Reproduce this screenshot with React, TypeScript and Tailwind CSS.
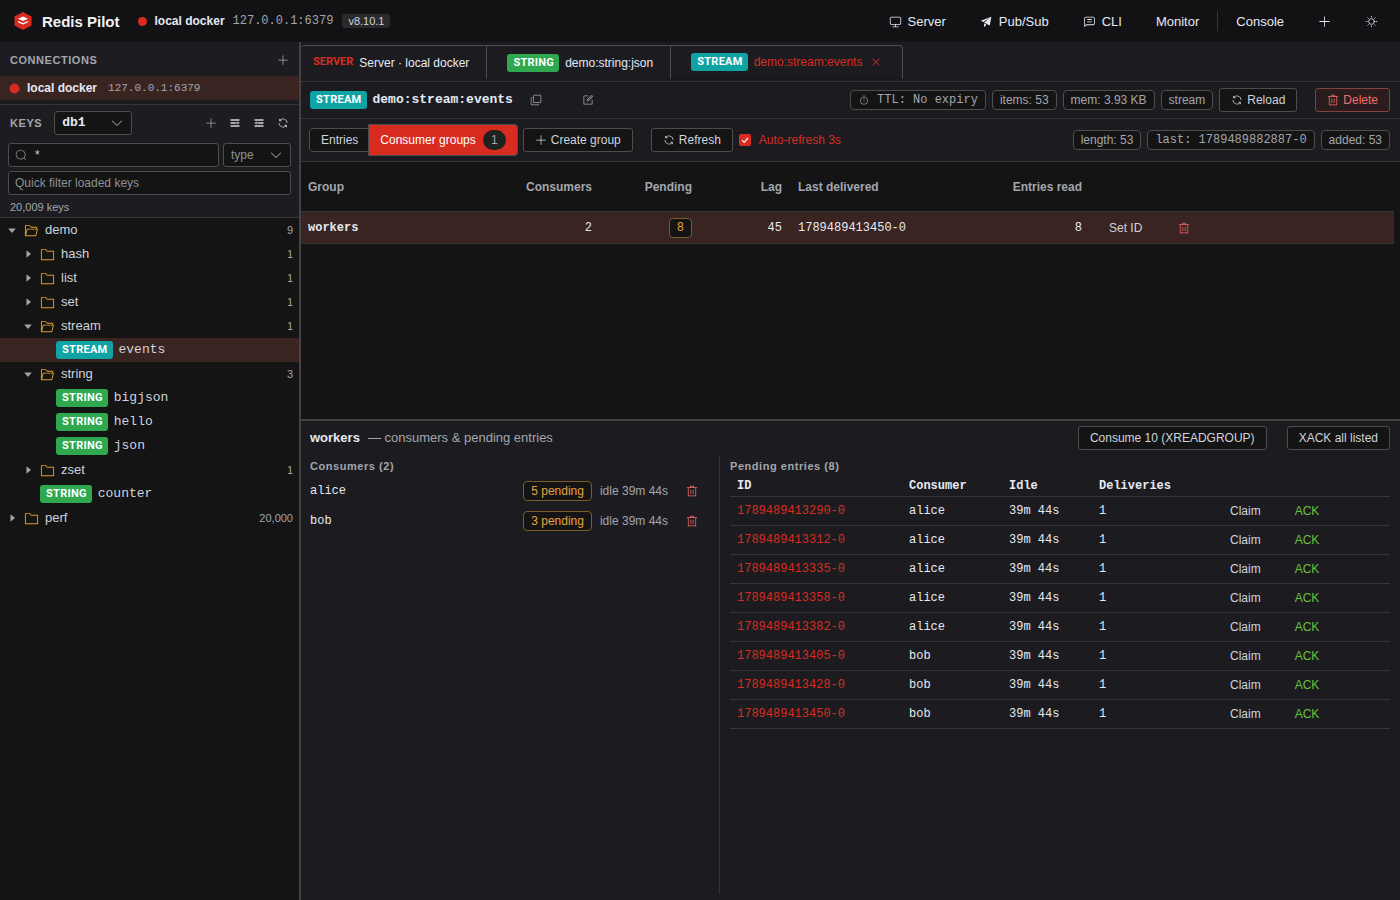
import type { ReactNode } from 'react'
import clsx from 'clsx'

const icons = {
  plus: 'M480 480V128a32 32 0 0 1 64 0v352h352a32 32 0 1 1 0 64H544v352a32 32 0 1 1-64 0V544H128a32 32 0 0 1 0-64z',
  close:
    'M764.288 214.592 512 466.88 259.712 214.592a31.936 31.936 0 0 0-45.12 45.12L466.752 512 214.528 764.224a31.936 31.936 0 1 0 45.12 45.184L512 557.184l252.288 252.288a31.936 31.936 0 0 0 45.12-45.12L557.12 512.064l252.288-252.352a31.936 31.936 0 1 0-45.12-45.184z',
  trash:
    'M160 256H96a32 32 0 0 1 0-64h256V95.936a32 32 0 0 1 32-32h256a32 32 0 0 1 32 32V192h256a32 32 0 1 1 0 64h-64v672a32 32 0 0 1-32 32H192a32 32 0 0 1-32-32zm448-64v-64H416v64zM224 896h576V256H224zm192-128a32 32 0 0 1-32-32V416a32 32 0 0 1 64 0v320a32 32 0 0 1-32 32m192 0a32 32 0 0 1-32-32V416a32 32 0 0 1 64 0v320a32 32 0 0 1-32 32',
  refresh:
    'M771.776 794.88A384 384 0 0 1 128 512h64a320 320 0 0 0 555.712 216.448H654.72a32 32 0 1 1 0-64h149.056a32 32 0 0 1 32 32v148.928a32 32 0 1 1-64 0v-50.56zM276.288 295.616h92.992a32 32 0 0 1 0 64H220.16a32 32 0 0 1-32-32V178.56a32 32 0 0 1 64 0v50.56A384 384 0 0 1 896.128 512h-64a320 320 0 0 0-555.776-216.384z',
  search:
    'm795.904 750.72 124.992 124.928a32 32 0 0 1-45.248 45.248L750.656 795.904a416 416 0 1 1 45.248-45.248zM480 832a352 352 0 1 0 0-704 352 352 0 0 0 0 704',
  arrowDown:
    'M831.872 340.864 512 652.672 192.128 340.864a30.592 30.592 0 0 0-42.752 0 29.12 29.12 0 0 0 0 41.6L489.664 714.24a32 32 0 0 0 44.672 0l340.288-331.712a29.12 29.12 0 0 0 0-41.728 30.592 30.592 0 0 0-42.752 0z',
  folder:
    'M128 192v640h768V320H485.76L357.504 192zm-32-64h287.872l128.384 128H928a32 32 0 0 1 32 32v576a32 32 0 0 1-32 32H96a32 32 0 0 1-32-32V160a32 32 0 0 1 32-32',
  folderOpen:
    'M878.08 448H241.92l-96 384h636.16l96-384zM832 384v-64H485.76L357.504 192H128v448l57.92-231.744A32 32 0 0 1 216.96 384zm-24.96 512H96a32 32 0 0 1-32-32V160a32 32 0 0 1 32-32h287.872l128.384 128H864a32 32 0 0 1 32 32v96h23.04a32 32 0 0 1 31.04 39.744l-112 448A32 32 0 0 1 807.04 896',
  caret: 'M384 192v640l384-320.064z',
  copy: 'M768 832a128 128 0 0 1-128 128H192A128 128 0 0 1 64 832V384a128 128 0 0 1 128-128v64a64 64 0 0 0-64 64v448a64 64 0 0 0 64 64h448a64 64 0 0 0 64-64zM384 128a64 64 0 0 0-64 64v448a64 64 0 0 0 64 64h448a64 64 0 0 0 64-64V192a64 64 0 0 0-64-64zm0-64h448a128 128 0 0 1 128 128v448a128 128 0 0 1-128 128H384a128 128 0 0 1-128-128V192A128 128 0 0 1 384 64',
  edit: 'M832 512a32 32 0 1 1 64 0v352a32 32 0 0 1-32 32H160a32 32 0 0 1-32-32V160a32 32 0 0 1 32-32h352a32 32 0 0 1 0 64H192v640h640zM469.952 554.24l52.8-7.552L847.104 222.4a32 32 0 1 0-45.248-45.248L477.44 501.44l-7.552 52.8zm422.4-422.4a96 96 0 0 1 0 135.808l-331.84 331.84a32 32 0 0 1-18.112 9.088L436.8 623.68a32 32 0 0 1-36.224-36.224l15.104-105.6a32 32 0 0 1 9.024-18.112l331.904-331.84a96 96 0 0 1 135.744 0z',
  timer:
    'M512 896a320 320 0 1 0 0-640 320 320 0 0 0 0 640m0 64a384 384 0 1 1 0-768 384 384 0 0 1 0 768M512 320a32 32 0 0 1 32 32l-.512 224a32 32 0 1 1-64 0L480 352a32 32 0 0 1 32-32M448 576a64 64 0 1 0 128 0 64 64 0 1 0-128 0m96-448v128h-64V128h-96a32 32 0 0 1 0-64h256a32 32 0 1 1 0 64z',
  monitor:
    'M544 768v128h192a32 32 0 1 1 0 64H288a32 32 0 1 1 0-64h192V768H192A128 128 0 0 1 64 640V256a128 128 0 0 1 128-128h640a128 128 0 0 1 128 128v384a128 128 0 0 1-128 128zM192 192a64 64 0 0 0-64 64v384a64 64 0 0 0 64 64h640a64 64 0 0 0 64-64V256a64 64 0 0 0-64-64z',
  promotion: 'm64 448 832-320-128 704-446.08-243.328L832 192 242.816 545.536zm256 512V657.024L512 768z',
  chat: 'M160 826.88 273.536 736H800a64 64 0 0 0 64-64V256a64 64 0 0 0-64-64H224a64 64 0 0 0-64 64zM296 800 147.968 918.4A32 32 0 0 1 96 893.44V256a128 128 0 0 1 128-128h576a128 128 0 0 1 128 128v416a128 128 0 0 1-128 128zM352 512h320q32 0 32 32t-32 32H352q-32 0-32-32t32-32m0-192h320q32 0 32 32t-32 32H352q-32 0-32-32t32-32',
  expand: 'M128 192h768v128H128zm0 256h512v128H128zm0 256h768v128H128zm576-352 192 160-192 128z',
  fold: 'M896 192H128v128h768zm0 256H384v128h512zm0 256H128v128h768zM320 384 128 512l192 128z',
}

function Icon({ name, className }: { name: keyof typeof icons; className?: string }) {
  return (
    <svg viewBox="0 0 1024 1024" fill="currentColor" className={clsx('shrink-0', className)} aria-hidden="true">
      <path d={icons[name]} />
    </svg>
  )
}

function SunIcon() {
  return (
    <svg viewBox="0 0 1024 1024" fill="none" stroke="currentColor" strokeWidth="64" strokeLinecap="round" className="size-[13px]" aria-hidden="true">
      <circle cx="512" cy="512" r="224" />
      <path d="M512 96v64M512 864v64M96 512h64M864 512h64M218 218l45 45M761 761l45 45M218 806l45-45M761 263l45-45" />
    </svg>
  )
}

function Logo() {
  return (
    <svg viewBox="0 0 20 20" className="size-5" aria-hidden="true">
      <path d="M10 1l8.500 4.500v9L10 19l-8.500-4.500v-9z" fill="#d82c20" />
      <path d="M10 5.500l5 2.200-5 2.200-5-2.200z" fill="#fff" />
      <path d="M5 10.600l5 2.200 5-2.200" fill="none" stroke="#fff" strokeWidth="1.300" />
    </svg>
  )
}

const badgeColors = {
  STREAM: 'bg-[#0fa3a3]',
  STRING: 'bg-[#2fa84f]',
}

function Badge({ type }: { type: keyof typeof badgeColors }) {
  return (
    <span
      className={clsx(
        'flex h-[18px] shrink-0 items-center rounded-[3px] pr-[5px] pl-1.5 font-[Roboto,sans-serif] text-[11px] leading-[18px] font-bold tracking-wide text-white',
        badgeColors[type],
      )}
    >
      {type}
    </span>
  )
}

function Tag({ mono, warn, children }: { mono?: boolean; warn?: boolean; children: ReactNode }) {
  return (
    <span
      className={clsx(
        'flex h-5 items-center rounded border bg-[#141414] px-[7px] text-xs whitespace-nowrap',
        warn ? 'border-[#7d5b28] text-[#e6a23c]' : 'border-[#4c4d4f] text-[#a3a6ad]',
        mono && "font-['Liberation_Mono',monospace]",
      )}
    >
      {children}
    </span>
  )
}

function Button({ className, children }: { className?: string; children: ReactNode }) {
  return (
    <button
      className={clsx(
        'flex h-6 items-center gap-1 rounded-[3px] border px-[11px] text-xs whitespace-nowrap',
        className,
      )}
    >
      {children}
    </button>
  )
}

const plain = 'border-[#4c4d4f] bg-[#141414] text-[#cfd3dc]'

type Node = { label: string; depth: number; count?: string; open?: boolean; type?: keyof typeof badgeColors; active?: boolean }

const tree: Node[] = [
  { label: 'demo', depth: 0, count: '9', open: true },
  { label: 'hash', depth: 1, count: '1' },
  { label: 'list', depth: 1, count: '1' },
  { label: 'set', depth: 1, count: '1' },
  { label: 'stream', depth: 1, count: '1', open: true },
  { label: 'events', depth: 2, type: 'STREAM', active: true },
  { label: 'string', depth: 1, count: '3', open: true },
  { label: 'bigjson', depth: 2, type: 'STRING' },
  { label: 'hello', depth: 2, type: 'STRING' },
  { label: 'json', depth: 2, type: 'STRING' },
  { label: 'zset', depth: 1, count: '1' },
  { label: 'counter', depth: 1, type: 'STRING' },
  { label: 'perf', depth: 0, count: '20,000' },
]

const indents = ['pl-1.5', 'pl-[22px]', 'pl-[38px]']

const pending = [
  ['1789489413290-0', 'alice'],
  ['1789489413312-0', 'alice'],
  ['1789489413335-0', 'alice'],
  ['1789489413358-0', 'alice'],
  ['1789489413382-0', 'alice'],
  ['1789489413405-0', 'bob'],
  ['1789489413428-0', 'bob'],
  ['1789489413450-0', 'bob'],
]

function TopBar() {
  return (
    <header className="flex h-[42px] shrink-0 items-center bg-[#121214] pr-[22px] pl-[13px] text-[13px]">
      <Logo />
      <h1 className="ml-[9px] text-[15px] leading-[23px] font-bold text-[#f0f2f5]">Redis Pilot</h1>
      <span className="ml-[18px] size-[9px] rounded-full bg-[#d82c20]" />
      <span className="ml-2 text-xs font-bold text-[#e5eaf3]">local docker</span>
      <span className="ml-2 font-['Liberation_Mono',monospace] text-xs text-[#a3a6ad]">127.0.0.1:6379</span>
      <span className="ml-[9px] rounded-[3px] bg-[#2a2a2d] px-1.5 text-[11px] leading-[14px] text-[#cfd3dc]">v8.10.1</span>
      <nav className="ml-auto flex items-center leading-[23px] text-[#e5eaf3]">
        <button className="flex items-center gap-1.5">
          <Icon name="monitor" className="size-[13px]" />
          Server
        </button>
        <button className="ml-[34px] flex items-center gap-1.5">
          <Icon name="promotion" className="size-[13px]" />
          Pub/Sub
        </button>
        <button className="ml-[34px] flex items-center gap-1.5">
          <Icon name="chat" className="size-[13px]" />
          CLI
        </button>
        <button className="ml-[34px]">Monitor</button>
        <span className="ml-[18px] h-5 w-px bg-[#363637]" />
        <button className="ml-[18px]">Console</button>
        <button className="ml-[34px]" aria-label="Add">
          <Icon name="plus" className="size-[13px]" />
        </button>
        <button className="ml-[34px]" aria-label="Toggle theme">
          <SunIcon />
        </button>
      </nav>
    </header>
  )
}

function TreeRow({ node }: { node: Node }) {
  return (
    <li
      className={clsx(
        'flex h-6 items-center pr-1.5 text-[13px] text-[#cfd3dc]',
        indents[node.depth],
        node.active && 'bg-[#3a2422]',
      )}
    >
      {node.type ? (
        <span className="ml-[18px] flex items-center gap-1.5">
          <Badge type={node.type} />
          <span className="font-['Liberation_Mono',monospace]">{node.label}</span>
        </span>
      ) : (
        <>
          <Icon name="caret" className={clsx('size-3 text-[#a3a6ad]', node.open && 'rotate-90')} />
          <Icon name={node.open ? 'folderOpen' : 'folder'} className="ml-1.5 size-[15px] text-[#d99e2b]" />
          <span className="ml-1.5">{node.label}</span>
          <span className="ml-auto text-[11px] text-[#a3a6ad]">{node.count}</span>
        </>
      )}
    </li>
  )
}

function Sidebar() {
  return (
    <aside className="flex w-[301px] shrink-0 flex-col border-r-2 border-[#434345] bg-[#141414]">
      <div className="bg-[#1d1d21] pb-1">
        <div className="flex h-[34px] items-center justify-between px-2.5 pt-0.5 text-[#a3a6ad]">
          <h2 className="text-[11px] font-bold tracking-wider">CONNECTIONS</h2>
          <button aria-label="Add connection">
            <Icon name="plus" className="size-3" />
          </button>
        </div>
        <div className="flex h-6 items-center bg-[#3a2422] pl-[9px]">
          <span className="size-[11px] rounded-full border border-[#7a2822] bg-[#d82c20]" />
          <span className="ml-[7px] text-xs font-bold text-[#e5eaf3]">local docker</span>
          <span className="ml-[11px] font-['Liberation_Mono',monospace] text-[11px] text-[#a3a6ad]">127.0.0.1:6379</span>
        </div>
      </div>
      <div className="flex flex-col border-y border-[#363637] bg-[#1d1d21] px-2 text-[#a3a6ad]">
        <div className="flex h-9 items-center pl-0.5">
          <h2 className="text-[11px] font-bold tracking-wider">KEYS</h2>
          <div className="relative ml-3 w-[78px]">
            <select
              aria-label="Database"
              className="block h-6 w-full appearance-none rounded-[3px] border border-[#4c4d4f] bg-[#141414] px-[7px] font-['Liberation_Mono',monospace] text-[13px] font-bold text-[#e5eaf3]"
            >
              <option>db1</option>
            </select>
            <Icon name="arrowDown" className="pointer-events-none absolute top-[5px] right-2 size-3.5" />
          </div>
          <div className="ml-auto flex items-center gap-3 pr-0.5">
            <button aria-label="New key">
              <Icon name="plus" className="size-3" />
            </button>
            <button aria-label="Expand all" className="text-[#cfd3dc]">
              <Icon name="expand" className="size-3" />
            </button>
            <button aria-label="Collapse all" className="text-[#cfd3dc]">
              <Icon name="fold" className="size-3" />
            </button>
            <button aria-label="Reload keys" className="text-[#cfd3dc]">
              <Icon name="refresh" className="size-3" />
            </button>
          </div>
        </div>
        <div className="mt-0.5 flex gap-1">
          <label className="flex h-6 min-w-0 flex-1 items-center gap-2 rounded-[3px] border border-[#4c4d4f] bg-[#141414] px-1.5">
            <Icon name="search" className="size-3 text-[#8d9095]" />
            <input aria-label="Key pattern" defaultValue="*" className="w-full min-w-0 text-xs text-[#cfd3dc] outline-none" />
          </label>
          <div className="relative w-[68px]">
            <select
              aria-label="Key type"
              className="block h-6 w-full appearance-none rounded-[3px] border border-[#4c4d4f] bg-[#141414] px-[7px] text-xs text-[#8d9095]"
            >
              <option>type</option>
            </select>
            <Icon name="arrowDown" className="pointer-events-none absolute top-[5px] right-2 size-3.5" />
          </div>
        </div>
        <input
          aria-label="Quick filter"
          placeholder="Quick filter loaded keys"
          className="mt-1 h-6 rounded-[3px] border border-[#4c4d4f] bg-[#141414] px-1.5 text-xs placeholder:text-[#8d9095]"
        />
        <p className="px-0.5 pt-[5px] pb-[3px] text-[11px] leading-[14px]">20,009 keys</p>
      </div>
      <ul>
        {tree.map((node) => (
          <TreeRow key={node.label} node={node} />
        ))}
      </ul>
    </aside>
  )
}

function Tabs() {
  return (
    <div className="flex h-10 shrink-0 border-b border-[#363637] pt-[3px] text-xs">
      <div className="flex h-[34px] rounded-t border-t border-r border-[#4c4d4f] text-[#e5eaf3]">
        <button className="flex items-center gap-1.5 border-r border-[#4c4d4f] pr-[17px] pl-3">
          <span className="font-[Roboto,sans-serif] text-[11px] font-bold text-[#d82c20]">SERVER</span>
          Server · local docker
        </button>
        <button className="flex items-center gap-1.5 border-r border-[#4c4d4f] pr-[17px] pl-5">
          <Badge type="STRING" />
          demo:string:json
        </button>
        <div className="flex items-center gap-1.5 border-b border-[#141414] px-5 text-[#d82c20]">
          <Badge type="STREAM" />
          <span>demo:stream:events</span>
          <button aria-label="Close tab" className="ml-0.5">
            <Icon name="close" className="size-3" />
          </button>
        </div>
      </div>
    </div>
  )
}

function KeyBar() {
  return (
    <div className="flex h-[37px] shrink-0 items-center gap-1.5 border-b border-[#363637] pr-2.5 pl-[9px]">
      <Badge type="STREAM" />
      <span className="font-['Liberation_Mono',monospace] text-[13px] font-bold text-[#e5eaf3]">demo:stream:events</span>
      <button aria-label="Copy key" className="ml-[11px] text-[#a3a6ad]">
        <Icon name="copy" className="size-3" />
      </button>
      <button aria-label="Rename key" className="ml-[34px] text-[#a3a6ad]">
        <Icon name="edit" className="size-3" />
      </button>
      <div className="ml-auto flex items-center gap-1.5">
        <Tag mono>
          <Icon name="timer" className="mr-2 ml-px size-2.5" />
          TTL: No expiry
        </Tag>
        <Tag>items: 53</Tag>
        <Tag>mem: 3.93 KB</Tag>
        <Tag>stream</Tag>
        <Button className={plain}>
          <Icon name="refresh" className="size-3" />
          Reload
        </Button>
        <Button className="ml-3 border-[#854040] bg-[#2b1d1d] text-[#f56c6c]">
          <Icon name="trash" className="size-3" />
          Delete
        </Button>
      </div>
    </div>
  )
}

function Toolbar() {
  return (
    <div className="flex h-[43px] shrink-0 items-center border-b border-[#363637] pr-2.5 pl-2 text-xs">
      <button className="h-6 rounded-l border border-[#4c4d4f] bg-[#141414] px-[11px] text-[#cfd3dc]">Entries</button>
      <button className="-ml-0.5 flex h-8 items-center gap-[7px] rounded-r border border-[#4c4d4f] bg-[#d82c20] px-[11px] text-white">
        Consumer groups
        <span className="flex h-5 w-[23px] items-center justify-center rounded-full bg-[#202121] text-[#a3a6ad]">1</span>
      </button>
      <Button className={clsx('ml-[5px]', plain)}>
        <Icon name="plus" className="size-3" />
        Create group
      </Button>
      <Button className={clsx('ml-[18px]', plain)}>
        <Icon name="refresh" className="size-3" />
        Refresh
      </Button>
      <label className="ml-1.5 flex items-center gap-2 text-[#d82c20]">
        <span className="grid size-3 place-items-center">
          <input type="checkbox" defaultChecked className="col-start-1 row-start-1 size-3 appearance-none rounded-xs bg-[#d82c20]" />
          <svg viewBox="0 0 12 12" className="pointer-events-none col-start-1 row-start-1 size-3" aria-hidden="true">
            <path d="M3 6.200l2.200 2.200L9 3.800" fill="none" stroke="#fff" strokeWidth="1.200" />
          </svg>
        </span>
        Auto-refresh 3s
      </label>
      <div className="ml-auto flex gap-1.5">
        <Tag>length: 53</Tag>
        <Tag mono>last: 1789489882887-0</Tag>
        <Tag>added: 53</Tag>
      </div>
    </div>
  )
}

function GroupTable() {
  return (
    <div className="h-[257px] shrink-0 bg-[#141414] pr-1.5">
      <table className="w-full table-fixed text-right text-xs">
        <colgroup>
          <col className="w-[199px]" />
          <col className="w-[100px]" />
          <col className="w-[100px]" />
          <col className="w-[90px]" />
          <col className="w-[180px]" />
          <col className="w-[120px]" />
          <col />
        </colgroup>
        <thead>
          <tr className="h-[49px] border-b border-[#363637] text-[#a3a6ad] *:pt-0.5">
            <th className="pl-[7px] text-left">Group</th>
            <th className="pr-2">Consumers</th>
            <th className="pr-2">Pending</th>
            <th className="pr-2">Lag</th>
            <th className="pl-2 text-left">Last delivered</th>
            <th className="pr-2">Entries read</th>
            <th />
          </tr>
        </thead>
        <tbody className="font-['Liberation_Mono',monospace] text-[#e5eaf3]">
          <tr className="h-8 border-b border-[#363637] bg-[#3a2422] *:pt-0.5">
            <td className="pl-[7px] text-left font-bold">workers</td>
            <td className="pr-2">2</td>
            <td className="pr-2">
              <div className="flex justify-end">
                <Tag mono warn>
                  8
                </Tag>
              </div>
            </td>
            <td className="pr-2">45</td>
            <td className="pl-2 text-left">1789489413450-0</td>
            <td className="pr-2">8</td>
            <td className="pl-[19px] font-['Liberation_Sans',sans-serif] text-[#cfd3dc]">
              <div className="flex items-center gap-9">
                <button>Set ID</button>
                <button aria-label="Delete group" className="text-[#f56c6c]">
                  <Icon name="trash" className="size-3" />
                </button>
              </div>
            </td>
          </tr>
        </tbody>
      </table>
    </div>
  )
}

function Consumer({ name, count }: { name: string; count: number }) {
  return (
    <li className="flex h-[30px] items-center pr-[21px]">
      <span className="font-['Liberation_Mono',monospace] text-[#e5eaf3]">{name}</span>
      <div className="ml-auto flex items-center gap-2 text-[#a3a6ad]">
        <Tag warn>{count} pending</Tag>
        idle 39m 44s
        <button aria-label={`Delete consumer ${name}`} className="ml-2.5 text-[#f56c6c]">
          <Icon name="trash" className="size-3" />
        </button>
      </div>
    </li>
  )
}

function Detail() {
  return (
    <section className="flex flex-1 flex-col gap-px border-t-2 border-[#434345] pr-2.5 pb-1.5 pl-[9px] text-xs">
      <div className="flex h-[34px] items-center gap-2 text-[13px]">
        <h2 className="font-bold text-[#e5eaf3]">workers</h2>
        <span className="text-[#a3a6ad]">— consumers &amp; pending entries</span>
        <Button className={clsx('ml-auto', plain)}>Consume 10 (XREADGROUP)</Button>
        <Button className={clsx('ml-3', plain)}>XACK all listed</Button>
      </div>
      <div className="flex flex-1">
        <div className="w-[410px] shrink-0 border-r border-[#363637]">
          <h3 className="h-5 text-[11px] leading-5 font-bold tracking-wider text-[#a3a6ad]">Consumers (2)</h3>
          <ul>
            <Consumer name="alice" count={5} />
            <Consumer name="bob" count={3} />
          </ul>
        </div>
        <div className="flex-1 pl-2.5">
          <h3 className="h-5 text-[11px] leading-5 font-bold tracking-wider text-[#a3a6ad]">Pending entries (8)</h3>
          <table className="w-full table-fixed text-left font-['Liberation_Mono',monospace] text-[#e5eaf3]">
            <colgroup>
              <col className="w-[172px]" />
              <col className="w-[100px]" />
              <col className="w-[90px]" />
              <col className="w-[120px]" />
              <col />
            </colgroup>
            <thead>
              <tr className="h-5 border-b border-[#363637]">
                <th className="pl-[7px]">ID</th>
                <th className="pl-[7px]">Consumer</th>
                <th className="pl-[7px]">Idle</th>
                <th className="pl-[7px]">Deliveries</th>
                <th />
              </tr>
            </thead>
            <tbody>
              {pending.map(([id, consumer]) => (
                <tr key={id} className="h-[29px] border-b border-[#363637]">
                  <td className="pl-[7px] text-[#d82c20]">{id}</td>
                  <td className="pl-[7px]">{consumer}</td>
                  <td className="pl-[7px]">39m 44s</td>
                  <td className="pl-[7px]">1</td>
                  <td className="pl-[18px] font-['Liberation_Sans',sans-serif]">
                    <button className="text-[#cfd3dc]">Claim</button>
                    <button className="ml-[34px] text-[#67c23a]">ACK</button>
                  </td>
                </tr>
              ))}
            </tbody>
          </table>
        </div>
      </div>
    </section>
  )
}

export default function App() {
  return (
    <div className="flex min-h-screen flex-col bg-[#141414] font-['Liberation_Sans',Arial,sans-serif]">
      <TopBar />
      <div className="flex flex-1">
        <Sidebar />
        <main className="flex min-w-0 flex-1 flex-col bg-[#1c1c20]">
          <Tabs />
          <KeyBar />
          <Toolbar />
          <GroupTable />
          <Detail />
        </main>
      </div>
    </div>
  )
}
